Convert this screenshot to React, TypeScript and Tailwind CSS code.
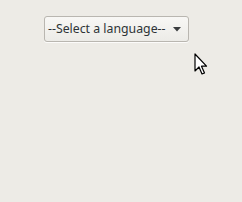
export default function App() {
  return (
    <div className="relative w-[242px] h-[202px] bg-[#edebe6] overflow-hidden" style={{ fontFamily: '"Noto Sans", "Open Sans", sans-serif' }}>
      <div className="pt-4 pl-[44px]">
        <div className="flex items-center w-[145px] h-[26px] border border-[#b9b6b0] rounded-[3px] bg-gradient-to-b from-[#f8f7f5] to-[#ecebe7] pl-[3px] pr-[7px] text-[12.3px] text-[#2e3436] shadow-[0_1px_0_rgba(255,255,255,0.8)]">
          <span className="flex-1 leading-none whitespace-nowrap">--Select a language--</span>
          <svg width="8" height="5" viewBox="0 0 8 5" className="shrink-0">
            <path d="M0 0 H8 L4 4.5 Z" fill="#3a3d3e" />
          </svg>
        </div>
      </div>
      <svg className="absolute left-[194px] top-[53px]" width="14" height="24" viewBox="0 0 14 24">
        <path d="M1 1 V18 L5 14 L8 21 L10.5 20 L7.5 13.2 L12.5 13.2 Z" fill="#ffffff" stroke="#000000" strokeWidth="1.2" strokeLinejoin="round" />
      </svg>
    </div>
  )
}
